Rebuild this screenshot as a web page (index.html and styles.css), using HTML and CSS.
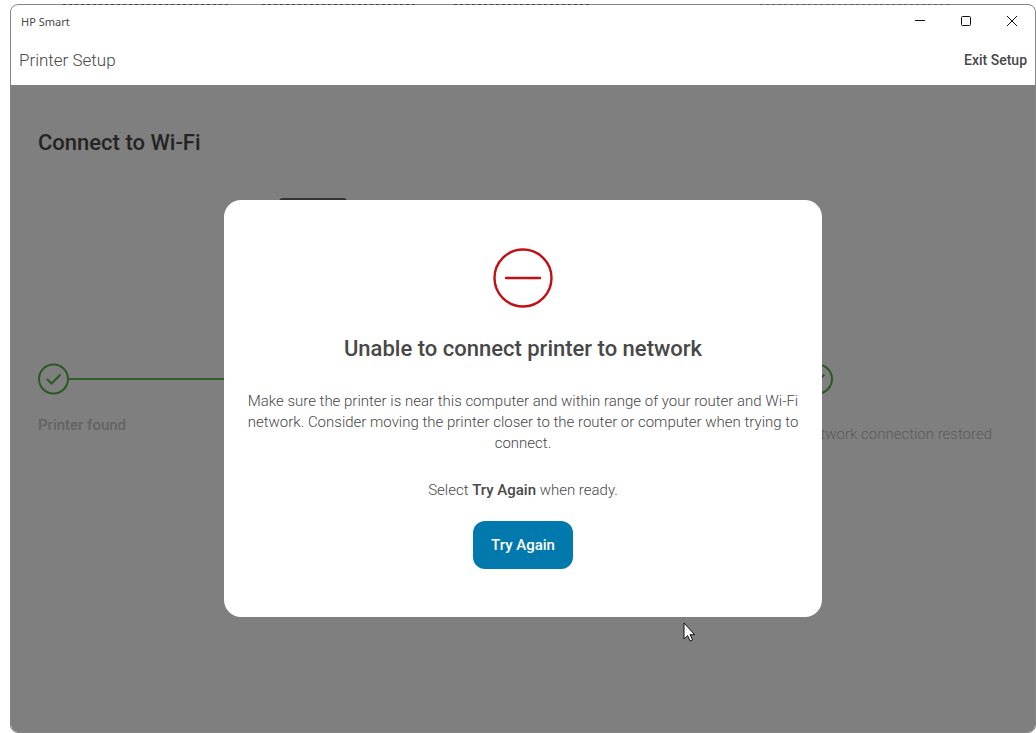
FILE: index.html
```
<!DOCTYPE html>
<html lang="en">
<head>
<meta charset="utf-8">
<title>HP Smart</title>
<link rel="stylesheet" href="styles.css">
</head>
<body>
<div class="behind" aria-hidden="true"><i class="speck one"></i><i class="speck two"></i><i class="speck three"></i><i class="speck four"></i></div>
<div class="window">
  <header class="titlebar">
    <span class="app-name">HP Smart</span>
    <div class="controls">
      <button class="control" type="button" aria-label="Minimize"><svg width="12" height="12" viewBox="0 0 12 12"><path d="M1 5.5h10"/></svg></button>
      <button class="control" type="button" aria-label="Maximize"><svg width="12" height="12" viewBox="0 0 12 12"><rect x="1.5" y="1.5" width="9" height="9" rx="1"/></svg></button>
      <button class="control" type="button" aria-label="Close"><svg width="12" height="12" viewBox="0 0 12 12"><path d="M1 1l10 10M11 1L1 11"/></svg></button>
    </div>
  </header>
  <nav class="setup-bar">
    <span class="setup-title">Printer Setup</span>
    <button class="exit" type="button">Exit Setup</button>
  </nav>
  <main class="content">
    <h1 class="page-title">Connect to Wi-Fi</h1>
    <div class="picture"><div class="printer"></div></div>
    <div class="steps">
      <section class="step first">
        <div class="track">
          <svg class="check" width="31" height="32" viewBox="0 0 31 32"><circle cx="15.5" cy="16" r="14.5"/><path d="M9 16l4.5 4.5 9-9"/></svg>
          <div class="line"></div>
        </div>
        <p class="label">Printer found</p>
      </section>
      <section class="step last">
        <svg class="check" width="31" height="32" viewBox="0 0 31 32"><circle cx="15.5" cy="16" r="14.5"/><path d="M9 16l4.5 4.5 9-9"/></svg>
        <p class="label">Network connection restored</p>
      </section>
    </div>
    <div class="overlay">
      <div class="dialog" role="alertdialog" aria-labelledby="dialog-title">
        <svg class="stop" width="62" height="62" viewBox="0 0 62 62"><circle cx="31" cy="31" r="28.5"/><path d="M14 31h34"/></svg>
        <h2 class="dialog-title" id="dialog-title">Unable to connect printer to network</h2>
        <p class="text">Make sure the printer is near this computer and within range of your router and Wi-Fi network. Consider moving the printer closer to the router or computer when trying to connect.</p>
        <p class="text ready">Select <strong>Try Again</strong> when ready.</p>
        <button class="retry" type="button">Try Again</button>
      </div>
    </div>
  </main>
</div>
<svg class="cursor" width="13" height="20" viewBox="0 0 13 20"><path d="M1 1v16l3.6-3.4 2.6 5.4 2.4-1.1-2.5-5.2h4.6z"/></svg>
</body>
</html>
```
FILE: styles.css
```
* { box-sizing: border-box; }
body {
  margin: 0;
  height: 100vh;
  padding: 4px 0 0 10px;
  background: #fff;
  color: #484848;
  font-family: Roboto, sans-serif;
  overflow: hidden;
}
h1, h2, p { margin: 0; }
button { border: 0; background: none; padding: 0; font: inherit; color: inherit; }
.behind { position: absolute; top: 4px; left: 63px; display: flex; z-index: 1; }
.speck { height: 1px; background: repeating-linear-gradient(90deg, #444 0 3px, #888 3px 6px); }
.one { width: 165px; }
.two { width: 156px; margin-left: 34px; }
.three { width: 136px; margin-left: 36px; }
.four { width: 190px; margin-left: 170px; opacity: .6; }
.window {
  height: 100%;
  display: flex;
  flex-direction: column;
  border: 1px solid #858585;
  border-radius: 8px;
  overflow: hidden;
}
.titlebar { display: flex; justify-content: space-between; align-items: center; height: 32px; padding-left: 10px; }
.app-name { font: 11px "Noto Sans", sans-serif; }
.controls { display: flex; }
.control { width: 46px; height: 32px; display: grid; place-items: center; }
.control svg { fill: none; stroke: #111; stroke-width: 1; }
.setup-bar { display: flex; justify-content: space-between; align-items: center; height: 48px; padding: 0 8px 2px; }
.setup-title { font-size: 17px; font-weight: 300; }
.exit { font-size: 14px; font-weight: 500; }
.content { position: relative; flex: 1; padding: 42px 27px; background: #fff; }
.page-title { font-size: 22px; font-weight: 500; line-height: 31px; }
.picture { height: 205px; padding: 40px 0 0 241px; }
.printer { width: 68px; height: 80px; border-radius: 4px; background: #68666c; }
.steps { display: flex; }
.first { flex: 1; }
.last { width: 206px; }
.track { display: flex; align-items: center; }
.line { flex: 1; height: 2px; background: #60b850; }
.check { display: block; fill: none; stroke: #54b444; stroke-width: 2; }
.label { line-height: 20px; color: #c8c8c8; }
.first .label { margin-top: 20px; font-size: 15px; font-weight: 500; }
.last .label { margin-top: 29px; font-size: 15px; font-weight: 300; color: #b8b8b8; white-space: nowrap; }
.overlay {
  position: absolute;
  inset: 0;
  display: flex;
  align-items: center;
  justify-content: center;
  background: rgba(0, 0, 0, .5);
}
.dialog {
  width: 598px;
  max-width: 100%;
  display: flex;
  flex-direction: column;
  align-items: center;
  padding: 47px 20px 48px;
  border-radius: 17px;
  background: #fff;
  text-align: center;
}
.stop { fill: none; stroke: #c01015; stroke-width: 2.4; stroke-linecap: round; }
.dialog-title { margin-top: 24px; font-size: 22px; font-weight: 500; line-height: 32px; }
.text { margin-top: 26px; font-size: 15px; font-weight: 300; line-height: 21px; }
.text strong { font-weight: 500; }
.retry {
  margin-top: 20px;
  height: 48px;
  padding: 0 18px;
  border-radius: 12px;
  background: #0279ad;
  color: #fff;
  font-size: 15px;
  font-weight: 500;
}
.cursor { position: absolute; left: 683px; top: 622px; fill: #fff; stroke: #111; stroke-width: 1; }
```
